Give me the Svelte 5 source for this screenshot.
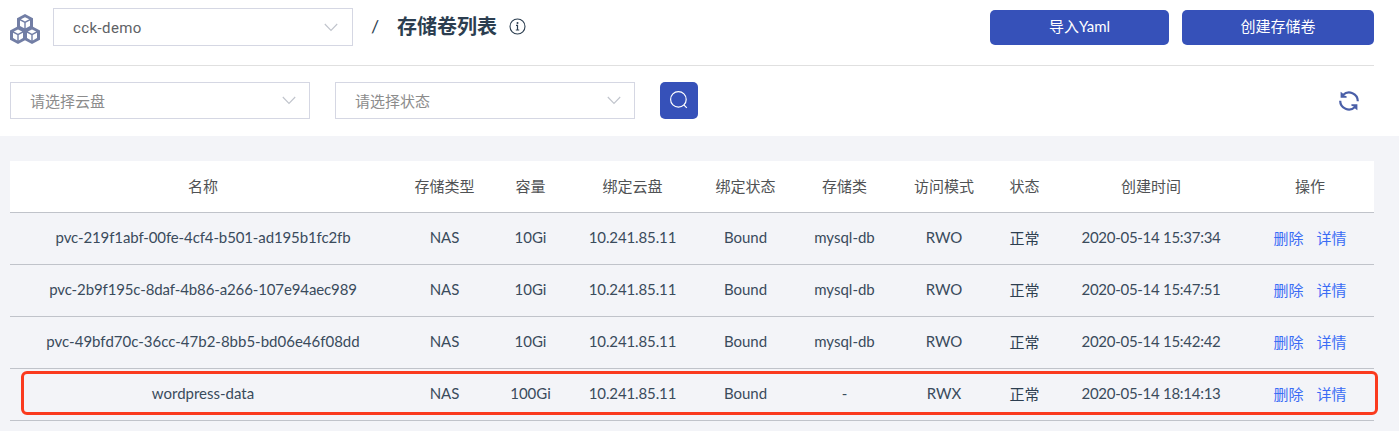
<script>
  const columns = ['名称', '存储类型', '容量', '绑定云盘', '绑定状态', '存储类', '访问模式', '状态', '创建时间', '操作'];
  const rows = [
    ['pvc-219f1abf-00fe-4cf4-b501-ad195b1fc2fb', 'NAS', '10Gi', '10.241.85.11', 'Bound', 'mysql-db', 'RWO', '正常', '2020-05-14 15:37:34'],
    ['pvc-2b9f195c-8daf-4b86-a266-107e94aec989', 'NAS', '10Gi', '10.241.85.11', 'Bound', 'mysql-db', 'RWO', '正常', '2020-05-14 15:47:51'],
    ['pvc-49bfd70c-36cc-47b2-8bb5-bd06e46f08dd', 'NAS', '10Gi', '10.241.85.11', 'Bound', 'mysql-db', 'RWO', '正常', '2020-05-14 15:42:42'],
    ['wordpress-data', 'NAS', '100Gi', '10.241.85.11', 'Bound', '-', 'RWX', '正常', '2020-05-14 18:14:13']
  ];
  const cubes = [[15, 0], [8, 12.2], [22, 12.2]];
</script>

{#snippet chevron()}
  <svg class="chevron" width="14" height="9" viewBox="0 0 14 9"><path d="M.8 1 7 7.5 13.2 1" fill="none" stroke="#c0c4cc" stroke-width="1.1" /></svg>
{/snippet}

<div class="page">
  <div class="top">
    <header>
      <svg class="logo" width="30" height="30" viewBox="0 0 30 30">
        {#each cubes as [x, y]}
          <g transform="translate({x} {y})">
            <path d="M0 0 8 4.2V13.6L0 17.8-8 13.6V4.2Z" fill="#727ea5" />
          </g>
        {/each}
        {#each cubes as [x, y]}
          <g transform="translate({x} {y})">
            <path d="M0 3.2 4.2 5.3 0 7.5-4.2 5.3ZM-5 6.5-.7 8.8V14.2L-5 11.9ZM5 6.5.7 8.8V14.2L5 11.9Z" fill="#fff" />
          </g>
        {/each}
      </svg>
      <div class="select cluster"><span>cck-demo</span>{@render chevron()}</div>
      <span class="slash">/</span>
      <h1>存储卷列表</h1>
      <svg class="info" width="17" height="17" viewBox="0 0 17 17">
        <circle cx="8.5" cy="8.5" r="7.5" fill="none" stroke="#2c3e50" stroke-width="1.1" />
        <circle cx="8.5" cy="5" r="1" fill="#2c3e50" />
        <path d="M7 7.3H8.5V12M6.8 12H10.2" fill="none" stroke="#2c3e50" stroke-width="1.2" />
      </svg>
      <button class="import">导入Yaml</button>
      <button class="create">创建存储卷</button>
    </header>
    <div class="filters">
      <div class="select hint"><span>请选择云盘</span>{@render chevron()}</div>
      <div class="select hint"><span>请选择状态</span>{@render chevron()}</div>
      <button class="search" aria-label="搜索">
        <svg width="20" height="20" viewBox="0 0 20 20" fill="none" stroke="#fff" stroke-width="1.2"><circle cx="9.4" cy="9.4" r="7.8" /><path d="m14.8 14.8 3 3" /></svg>
      </button>
      <svg class="refresh" width="20" height="20" viewBox="0 0 20 20">
        <g fill="none" stroke="#4a5fa8" stroke-width="2.2"><path d="M4 4A8.7 8.7 0 0 1 18.8 10.2" /><path d="M16 16A8.7 8.7 0 0 1 1.2 9.8" /></g>
        <path d="M1.6.8V6.8H7.6V5.2L5.3 4.6 3.4 2ZM18.4 19.2V13.2H12.4V14.8L14.7 15.4 16.6 18Z" fill="#4a5fa8" />
      </svg>
    </div>
  </div>

  <main>
    <div class="row head">
      {#each columns as column}<div>{column}</div>{/each}
    </div>
    {#each rows as row, i}
      <div class="row" class:marked={i === 3}>
        {#each row as value, c}<div class:latin={c !== 7} class:cjk={c === 7} class:name={c === 0} class:time={c === 8} class:ip={c === 3}>{value}</div>{/each}
        <div class="actions"><span>删除</span><span>详情</span></div>
      </div>
    {/each}
  </main>
</div>

<style>
  :global(body) { margin: 0; background: #f3f4f8; }
  .page { height: 431px; overflow: hidden; font: 15px/20px Lato, "Noto Sans CJK SC", sans-serif; color: #2c3e50; }
  .top { box-sizing: border-box; height: 136px; padding: 0 25px 0 10px; background: #fff; }
  header { display: flex; align-items: flex-start; height: 65px; border-bottom: 1px solid #e0e0e0; }
  .logo { margin-top: 14px; }
  .select { box-sizing: border-box; display: flex; align-items: center; justify-content: space-between; width: 300px; height: 37px; padding: 0 13px 0 19px; border: 1px solid #d5d7e3; background: #fff; }
  .cluster { height: 38px; margin: 8px 0 0 13px; padding-right: 14px; color: #606266; font-family: Roboto, sans-serif; letter-spacing: .4px; padding-top: 1px; }
  .hint { margin-right: 25px; color: #8c8c8c; }
  .slash { margin: 16px 0 0 18px; width: 26px; font-size: 18px; }
  h1 { margin: 12px 0 0; font-size: 20px; line-height: 28px; font-weight: 600; width: 100px; white-space: nowrap; }
  .info { margin: 18px 0 0 12px; }
  button { box-sizing: border-box; height: 35px; padding: 0 0 3px; border: 0; border-radius: 5px; background: #3651b9; color: #fff; font: 15px/32px Lato, "Noto Sans CJK SC", sans-serif; }
  .import { width: 179px; margin: 10px 13px 0 auto; }
  .create { width: 192px; margin-top: 10px; }
  .filters { display: flex; padding-top: 16px; }
  .search { display: flex; align-items: center; justify-content: center; width: 38px; height: 37px; padding-bottom: 1px; }
  .refresh { margin: 9px 15px 0 auto; }
  main { padding: 25px 25px 0 10px; }
  .row { position: relative; box-sizing: border-box; display: grid; grid-template-columns: 386px 97px 75px 129px 97px 101px 98px 63px 190px 128px; align-items: center; height: 52px; border-bottom: 1px solid #c0c3ca; text-align: center; white-space: nowrap; }
  .head { background: #fff; color: #505254; padding-bottom: 1px; }
  .latin { padding-bottom: 3px; color: #3a4b5c; }
  .name { letter-spacing: -.12px; }
  .row:nth-child(4) .name, .row:nth-child(5) .name { letter-spacing: 0; }
  .time { letter-spacing: -.28px; }
  .ip { letter-spacing: -.12px; }
  .cjk, .actions { padding-bottom: 2px; }
  .actions { display: flex; justify-content: center; gap: 13px; color: #3a6cf5; }
  .marked::after { content: ""; position: absolute; left: 11px; top: 2px; right: -4px; height: 38px; border: 3px solid #fa3a1e; border-radius: 6px; }
</style>
